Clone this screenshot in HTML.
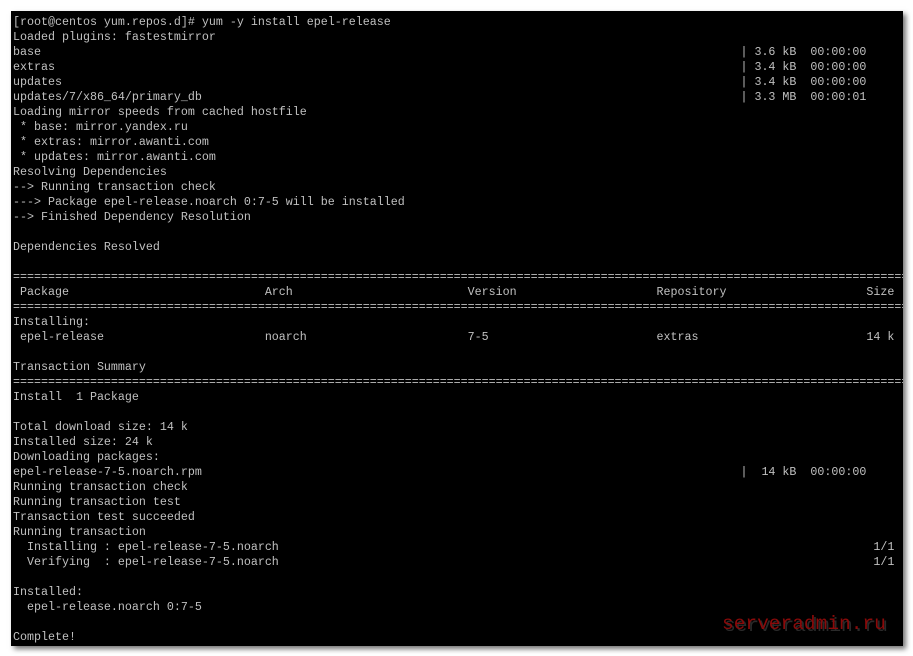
<!DOCTYPE html>
<html><head><meta charset="utf-8"><style>
html,body{margin:0;padding:0;background:#fff;width:913px;height:656px;overflow:hidden}
#box{position:absolute;left:11px;top:11px;width:892px;height:635px;background:#000;box-shadow:3px 3px 5px rgba(0,0,0,0.55);overflow:hidden}
#t{position:absolute;left:2px;top:4px;margin:0;font-family:"Liberation Mono",monospace;font-size:11.67px;line-height:15px;color:#c0c0c0;white-space:pre}
.c{display:inline-block}
#wm{position:absolute;left:711px;top:602px;font-family:"Liberation Mono",monospace;font-size:19.5px;color:#8a0a0a;text-shadow:2px 2px 0 #2a2a2a;letter-spacing:0}
</style></head><body>
<div id="box"><pre id="t">[root@centos yum.repos.d]# yum -y install epel-release
Loaded plugins: fastestmirror
<span class="c" style="width:104ch">base</span>| 3.6 kB  00:00:00
<span class="c" style="width:104ch">extras</span>| 3.4 kB  00:00:00
<span class="c" style="width:104ch">updates</span>| 3.4 kB  00:00:00
<span class="c" style="width:104ch">updates/7/x86_64/primary_db</span>| 3.3 MB  00:00:01
Loading mirror speeds from cached hostfile
 * base: mirror.yandex.ru
 * extras: mirror.awanti.com
 * updates: mirror.awanti.com
Resolving Dependencies
--&gt; Running transaction check
---&gt; Package epel-release.noarch 0:7-5 will be installed
--&gt; Finished Dependency Resolution

Dependencies Resolved

====================================================================================================================================
<span class="c" style="width:36ch"> Package</span><span class="c" style="width:29ch">Arch</span><span class="c" style="width:27ch">Version</span><span class="c" style="width:30ch">Repository</span>Size
====================================================================================================================================
Installing:
<span class="c" style="width:36ch"> epel-release</span><span class="c" style="width:29ch">noarch</span><span class="c" style="width:27ch">7-5</span><span class="c" style="width:30ch">extras</span>14 k

Transaction Summary
====================================================================================================================================
Install  1 Package

Total download size: 14 k
Installed size: 24 k
Downloading packages:
<span class="c" style="width:104ch">epel-release-7-5.noarch.rpm</span>|  14 kB  00:00:00
Running transaction check
Running transaction test
Transaction test succeeded
Running transaction
<span class="c" style="width:123ch">  Installing : epel-release-7-5.noarch</span>1/1
<span class="c" style="width:123ch">  Verifying  : epel-release-7-5.noarch</span>1/1

Installed:
  epel-release.noarch 0:7-5

Complete!</pre>
<div id="wm">serveradmin.ru</div>
</div>
</body></html>
